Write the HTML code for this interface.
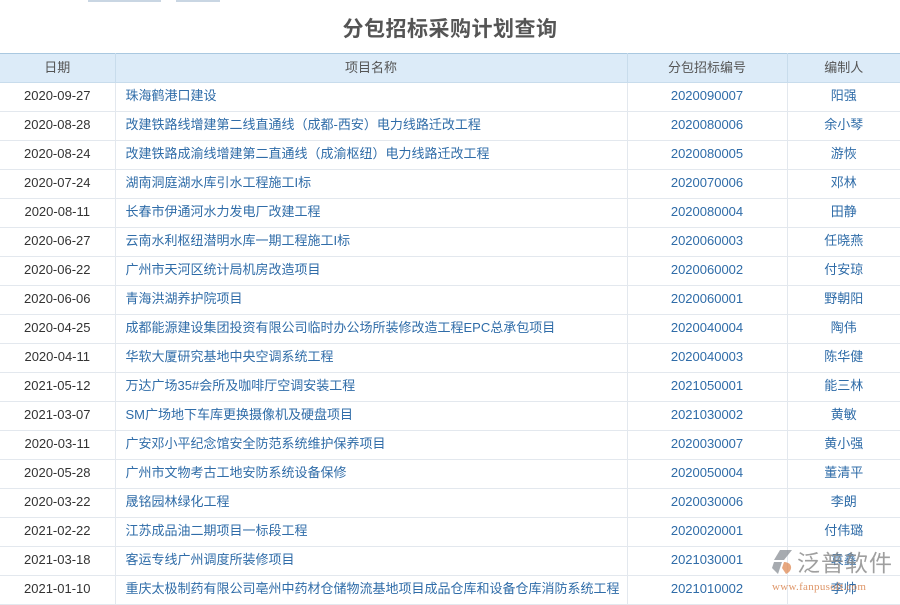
<!DOCTYPE html>
<html><head><meta charset="utf-8"><style>
*{margin:0;padding:0;box-sizing:border-box}
body{width:900px;height:600px;overflow:hidden;background:#fff;font-family:"Liberation Sans","Noto Sans CJK SC",sans-serif;position:relative}
.b1{position:absolute;left:88px;top:0;width:73px;height:2px;background:#c9d6e3}
.b2{position:absolute;left:176px;top:0;width:44px;height:2px;background:#c9d6e3}
h1{position:absolute;top:13px;left:0;width:900px;text-align:center;font-size:21px;font-weight:bold;color:#555;letter-spacing:0.5px}
table{position:absolute;top:53px;left:0;width:900px;border-collapse:collapse;font-size:13px;table-layout:fixed}
th{height:29px;background:#dcebf8;color:#555;font-weight:normal;border-top:1px solid #a9c8e0;border-right:1px solid #c8dcec;border-bottom:1px solid #c8dcec;line-height:14px;padding:0}
td{height:29px;border-bottom:1px solid #e3e8ee;border-right:1px solid #e3e8ee;color:#2f6ca8;line-height:14px;padding:0 0 2px 0;white-space:nowrap}
td:first-child{color:#333;text-align:center}
td:nth-child(2){padding-left:10px}
td:nth-child(3),td:nth-child(4){text-align:center}
th:last-child,td:last-child{border-right:none}
.wm{position:absolute;left:770px;top:548px;opacity:.75}
.wt{position:absolute;left:797px;top:549px;font-size:23px;line-height:28px;color:#888;letter-spacing:1px;opacity:.8;white-space:nowrap}
.wu{position:absolute;left:772px;top:581px;font-size:11px;font-family:"Liberation Serif",serif;color:#d9844f;letter-spacing:0.3px;opacity:.85;white-space:nowrap}
</style></head><body>
<div class="b1"></div><div class="b2"></div>
<h1>分包招标采购计划查询</h1>
<table>
<tr><th style="width:115px">日期</th><th style="width:512px">项目名称</th><th style="width:160px">分包招标编号</th><th>编制人</th></tr>
<tr><td>2020-09-27</td><td>珠海鹤港口建设</td><td>2020090007</td><td>阳强</td></tr>
<tr><td>2020-08-28</td><td>改建铁路线增建第二线直通线（成都-西安）电力线路迁改工程</td><td>2020080006</td><td>余小琴</td></tr>
<tr><td>2020-08-24</td><td>改建铁路成渝线增建第二直通线（成渝枢纽）电力线路迁改工程</td><td>2020080005</td><td>游恢</td></tr>
<tr><td>2020-07-24</td><td>湖南洞庭湖水库引水工程施工I标</td><td>2020070006</td><td>邓林</td></tr>
<tr><td>2020-08-11</td><td>长春市伊通河水力发电厂改建工程</td><td>2020080004</td><td>田静</td></tr>
<tr><td>2020-06-27</td><td>云南水利枢纽潜明水库一期工程施工I标</td><td>2020060003</td><td>任晓燕</td></tr>
<tr><td>2020-06-22</td><td>广州市天河区统计局机房改造项目</td><td>2020060002</td><td>付安琼</td></tr>
<tr><td>2020-06-06</td><td>青海洪湖养护院项目</td><td>2020060001</td><td>野朝阳</td></tr>
<tr><td>2020-04-25</td><td>成都能源建设集团投资有限公司临时办公场所装修改造工程EPC总承包项目</td><td>2020040004</td><td>陶伟</td></tr>
<tr><td>2020-04-11</td><td>华软大厦研究基地中央空调系统工程</td><td>2020040003</td><td>陈华健</td></tr>
<tr><td>2021-05-12</td><td>万达广场35#会所及咖啡厅空调安装工程</td><td>2021050001</td><td>能三林</td></tr>
<tr><td>2021-03-07</td><td>SM广场地下车库更换摄像机及硬盘项目</td><td>2021030002</td><td>黄敏</td></tr>
<tr><td>2020-03-11</td><td>广安邓小平纪念馆安全防范系统维护保养项目</td><td>2020030007</td><td>黄小强</td></tr>
<tr><td>2020-05-28</td><td>广州市文物考古工地安防系统设备保修</td><td>2020050004</td><td>董清平</td></tr>
<tr><td>2020-03-22</td><td>晟铭园林绿化工程</td><td>2020030006</td><td>李朗</td></tr>
<tr><td>2021-02-22</td><td>江苏成品油二期项目一标段工程</td><td>2020020001</td><td>付伟璐</td></tr>
<tr><td>2021-03-18</td><td>客运专线广州调度所装修项目</td><td>2021030001</td><td>袁鑫</td></tr>
<tr><td>2021-01-10</td><td>重庆太极制药有限公司亳州中药材仓储物流基地项目成品仓库和设备仓库消防系统工程</td><td>2021010002</td><td>李帅</td></tr>
</table>
<svg class="wm" width="26" height="30" viewBox="0 0 26 30"><path d="M10 2 L22 2 L14 12 L4 12 Z" fill="#8a8f96"/><path d="M4 14 L12 14 L8 26 L2 20 Z" fill="#8a8f96"/><path d="M14 14 C22 14 24 22 16 26 L12 20 Z" fill="#e08a55"/></svg>
<div class="wt">泛普软件</div>
<div class="wu">www.fanpusoft.com</div>
</body></html>
